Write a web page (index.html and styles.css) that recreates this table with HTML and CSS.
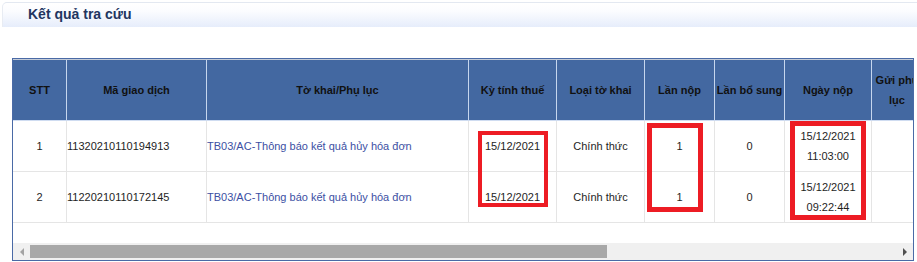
FILE: index.html
```html
<!DOCTYPE html>
<html lang="vi">
<head>
<meta charset="utf-8">
<title>Kết quả tra cứu</title>
<link rel="stylesheet" href="styles.css">
</head>
<body>
<div class="page">
  <div class="titlebar"><h2 class="title">Kết quả tra cứu</h2></div>
  <div class="result">
    <div class="grid head">
      <div class="cell">STT</div>
      <div class="cell">Mã giao dịch</div>
      <div class="cell">Tờ khai/Phụ lục</div>
      <div class="cell">Kỳ tính thuế</div>
      <div class="cell">Loại tờ khai</div>
      <div class="cell">Lần nộp</div>
      <div class="cell">Lần bổ sung</div>
      <div class="cell">Ngày nộp</div>
      <div class="cell wrap">Gửi phụ lục</div>
      <div class="cell">Trạng thái</div>
    </div>
    <div class="grid row">
      <div class="cell">1</div>
      <div class="cell left">11320210110194913</div>
      <div class="cell left"><a class="link" href="#">TB03/AC-Thông báo kết quả hủy hóa đơn</a></div>
      <div class="cell">15/12/2021</div>
      <div class="cell">Chính thức</div>
      <div class="cell">1</div>
      <div class="cell">0</div>
      <div class="cell two">15/12/2021<br>11:03:00</div>
      <div class="cell"></div>
      <div class="cell"></div>
    </div>
    <div class="grid row">
      <div class="cell">2</div>
      <div class="cell left">11220210110172145</div>
      <div class="cell left"><a class="link" href="#">TB03/AC-Thông báo kết quả hủy hóa đơn</a></div>
      <div class="cell">15/12/2021</div>
      <div class="cell">Chính thức</div>
      <div class="cell">1</div>
      <div class="cell">0</div>
      <div class="cell two">15/12/2021<br>09:22:44</div>
      <div class="cell"></div>
      <div class="cell"></div>
    </div>
    <div class="filler"></div>
    <div class="scrollbar">
      <div class="sbtn"><span class="arrow-l"></span></div>
      <div class="track"><div class="thumb"></div></div>
      <div class="sbtn"><span class="arrow-r"></span></div>
    </div>
  </div>
  <div class="mark m1"></div>
  <div class="mark m2"></div>
  <div class="mark m3"></div>
</div>
</body>
</html>
```
FILE: styles.css
```css
html, body {
  margin: 0;
  padding: 0;
  background: #ffffff;
}
.page {
  position: relative;
  width: 917px;
  height: 262px;
  overflow: hidden;
  font-family: "Liberation Sans", Arial, sans-serif;
}
.titlebar {
  margin: 2px 0 0 2px;
  height: 24px;
  border-top: 1px solid #e3e8f1;
  border-left: 1px solid #e8ecf3;
  border-radius: 5px 0 0 0;
  background: linear-gradient(#ffffff 0%, #fbfcff 35%, #e6edfb 100%);
  box-sizing: border-box;
  height: 25px;
}
.title {
  margin: 0;
  padding-left: 25px;
  font-size: 14px;
  font-weight: bold;
  line-height: 22px;
  color: #22355f;
}
.result {
  margin: 31px 0 0 12px;
  width: 902px;
  border: 1px solid #4a6aa6;
  box-sizing: border-box;
  overflow: hidden;
}
.grid {
  display: grid;
  grid-template-columns: 53px 139px 261px 87px 87px 69px 69px 86px 50px 100px;
  column-gap: 1px;
  width: max-content;
}
.head {
  background: #c6d6ee;
  border-top: 1px solid #c3cbd8;
  border-bottom: 1px solid #cfdcf1;
}
.head .cell {
  height: 60px;
  background: #4368a1;
  font-weight: bold;
  color: #111111;
  white-space: nowrap;
}
.head .cell.wrap {
  white-space: normal;
  line-height: 20px;
}
.row {
  background: #e5e5e5;
  border-bottom: 1px solid #e5e5e5;
}
.row .cell {
  height: 50px;
  background: #ffffff;
  color: #1e1e1e;
  white-space: nowrap;
}
.cell {
  display: flex;
  align-items: center;
  justify-content: center;
  text-align: center;
  font-size: 11px;
  line-height: 14px;
}
.cell.left {
  justify-content: flex-start;
  text-align: left;
}
.cell.two {
  line-height: 20px;
}
.link {
  color: #3c4fa3;
  text-decoration: none;
}
.filler {
  height: 20px;
}
.scrollbar {
  display: flex;
  height: 17px;
  background: #f0f0f0;
}
.sbtn {
  width: 17px;
  display: flex;
  align-items: center;
  justify-content: center;
}
.track {
  flex: 1;
  padding-top: 2px;
}
.thumb {
  width: 577px;
  height: 13px;
  background: #a8a8a8;
}
.arrow-l {
  width: 0;
  height: 0;
  border-top: 4px solid transparent;
  border-bottom: 4px solid transparent;
  border-right: 4px solid #a3a3a3;
}
.arrow-r {
  width: 0;
  height: 0;
  border-top: 4px solid transparent;
  border-bottom: 4px solid transparent;
  border-left: 4px solid #505050;
}
.mark {
  position: absolute;
  border: 4px solid #ed1c24;
  box-sizing: border-box;
}
.m1 {
  left: 478px;
  top: 131px;
  width: 70px;
  height: 76px;
}
.m2 {
  left: 647px;
  top: 123px;
  width: 56px;
  height: 89px;
  border-width: 5px;
}
.m3 {
  left: 790px;
  top: 121px;
  width: 76px;
  height: 99px;
  border-width: 5px;
}
```
